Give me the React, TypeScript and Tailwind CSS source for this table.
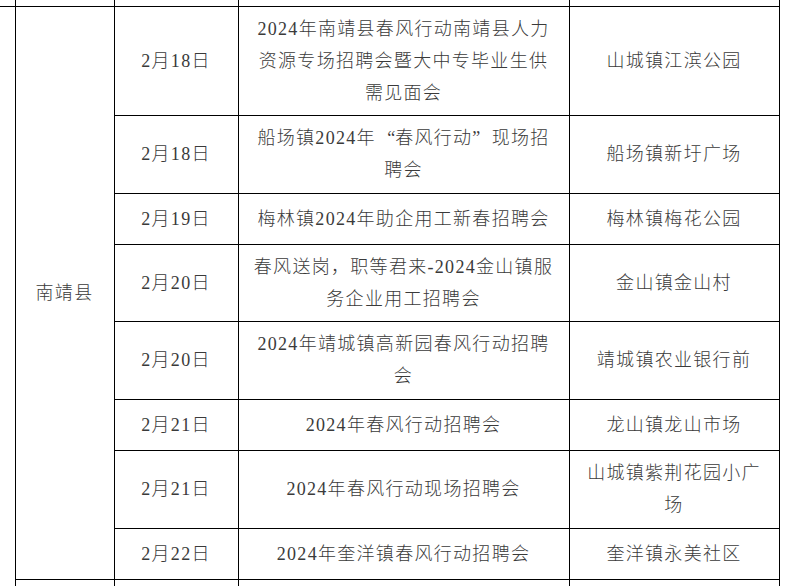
import type { ReactNode } from "react";

type Row = {
  date: string;
  title: ReactNode[];
  place: string[];
  h: string;
};

// full-width curly quotes, SimSun style
function Q({ c, open }: { c: string; open?: boolean }) {
  return (
    <span
      className={
        open
          ? "inline-block w-[19.3px] text-right tracking-normal"
          : "inline-block w-[19.3px] text-left tracking-normal"
      }
    >
      {c}
    </span>
  );
}

const rows: Row[] = [
  {
    date: "2月18日",
    title: ["2024年南靖县春风行动南靖县人力", "资源专场招聘会暨大中专毕业生供", "需见面会"],
    place: ["山城镇江滨公园"],
    h: "h-[109px]",
  },
  {
    date: "2月18日",
    title: [
      <>
        船场镇2024年<Q c="“" open />春风行动<Q c="”" />现场招
      </>,
      "聘会",
    ],
    place: ["船场镇新圩广场"],
    h: "h-[78px]",
  },
  {
    date: "2月19日",
    title: ["梅林镇2024年助企用工新春招聘会"],
    place: ["梅林镇梅花公园"],
    h: "h-[51px]",
  },
  {
    date: "2月20日",
    title: ["春风送岗，职等君来-2024金山镇服", "务企业用工招聘会"],
    place: ["金山镇金山村"],
    h: "h-[77px]",
  },
  {
    date: "2月20日",
    title: ["2024年靖城镇高新园春风行动招聘", "会"],
    place: ["靖城镇农业银行前"],
    h: "h-[78px]",
  },
  {
    date: "2月21日",
    title: ["2024年春风行动招聘会"],
    place: ["龙山镇龙山市场"],
    h: "h-[51px]",
  },
  {
    date: "2月21日",
    title: ["2024年春风行动现场招聘会"],
    place: ["山城镇紫荆花园小广", "场"],
    h: "h-[78px]",
  },
  {
    date: "2月22日",
    title: ["2024年奎洋镇春风行动招聘会"],
    place: ["奎洋镇永美社区"],
    h: "h-[51px]",
  },
];

function Lines({ items }: { items: ReactNode[] }) {
  return (
    <>
      {items.map((t, i) => (
        <div key={i} className="whitespace-nowrap">
          {t}
        </div>
      ))}
    </>
  );
}

const cell = "border border-black p-0 text-center align-middle";

export default function App() {
  return (
    <div className="w-[792px] h-[586px] overflow-hidden bg-white font-['Liberation_Serif','Noto_Sans_CJK_SC',serif] font-light text-[18px] leading-[32px] tracking-[1.3px] text-[#3a3a3a]">
      <table className="border-collapse table-fixed w-[779px]">
        <colgroup>
          <col className="w-[15px]" />
          <col className="w-[99px]" />
          <col className="w-[124px]" />
          <col className="w-[331px]" />
          <col className="w-[210px]" />
        </colgroup>
        <tbody>
          <tr className="h-[6px]">
            <td className="border-r border-b border-black p-0 leading-none" />
            <td className="border-x border-b border-black p-0 leading-none" />
            <td className="border-x border-b border-black p-0 leading-none" />
            <td className="border-x border-b border-black p-0 leading-none" />
            <td className="border-x border-b border-black p-0 leading-none" />
          </tr>
          {rows.map((r, i) => (
            <tr key={i} className={r.h}>
              {i === 0 && (
                <>
                  <td rowSpan={9} className="border-r border-black p-0" />
                  <td rowSpan={8} className={cell}>
                    南靖县
                  </td>
                </>
              )}
              <td className={cell}>{r.date}</td>
              <td className={cell}>
                <Lines items={r.title} />
              </td>
              <td className={cell}>
                <Lines items={r.place} />
              </td>
            </tr>
          ))}
          <tr className="h-[20px]">
            <td className={cell} />
            <td className={cell} />
            <td className={cell} />
            <td className={cell} />
          </tr>
        </tbody>
      </table>
    </div>
  );
}
